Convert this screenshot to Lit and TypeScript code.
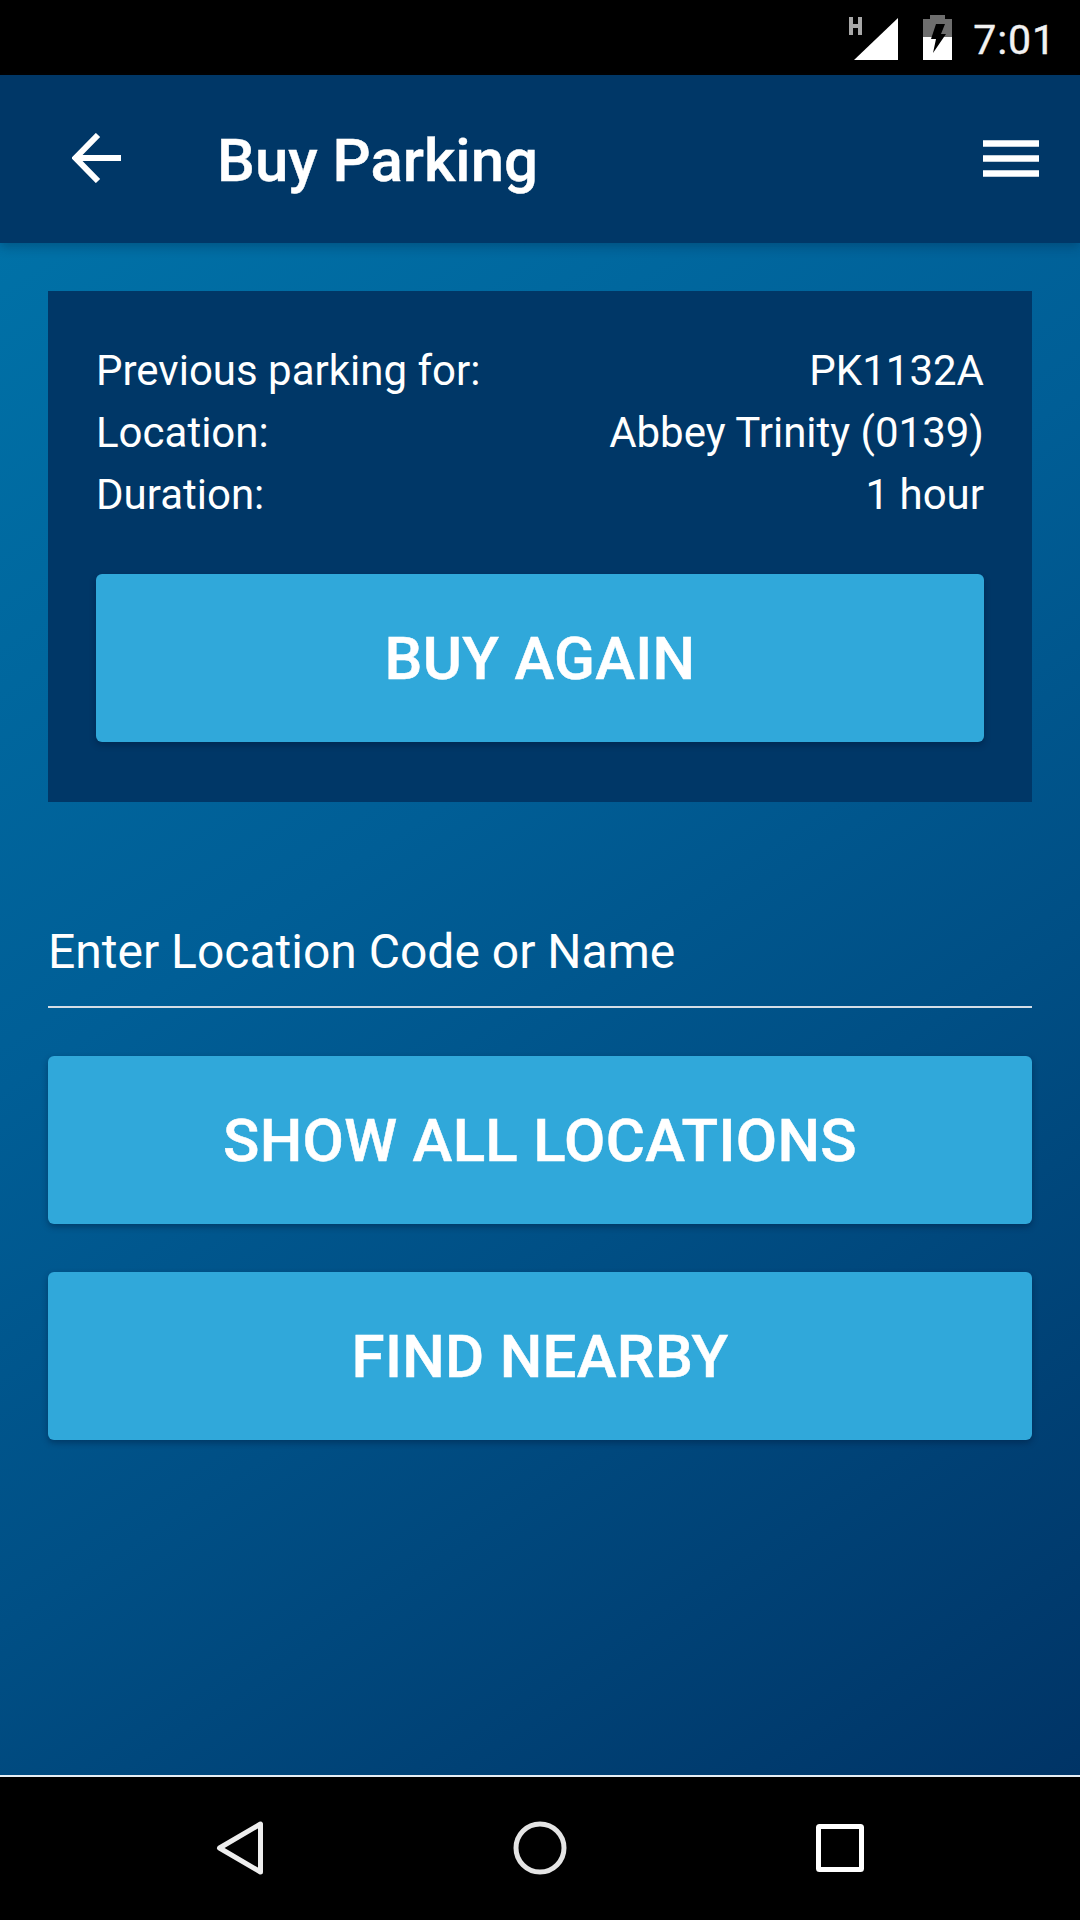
import { LitElement, html, css } from "lit";
import { customElement } from "lit/decorators.js";

@customElement("app-root")
export class AppRoot extends LitElement {
  static styles = css`
    :host { display: block; width: 1080px; height: 1920px; font-family: Roboto, "Liberation Sans", sans-serif; color: #fff; }
    .page { display: flex; flex-direction: column; height: 1920px; background: #000; overflow: hidden; }
    .status { height: 75px; flex: none; background: #000; display: flex; align-items: flex-start; padding-right: 24px; justify-content: flex-end; box-sizing: border-box; }
    .status svg { display: block; flex: none; }
    .sig { margin: 15px 0 0 0; }
    .bat { margin: 15px 0 0 24px; }
    .time { font-size: 41px; line-height: 48px; margin: 16px 0 0 21px; letter-spacing: 0.9px; color: #f2f2f2; -webkit-text-stroke: 0.4px #f2f2f2; }
    .bar { height: 168px; flex: none; background: #003767; display: flex; align-items: center; box-sizing: border-box; padding: 0 41px 0 72px; position: relative; z-index: 1; box-shadow: 0 4px 10px rgba(0, 30, 60, 0.3); }
    .bar svg { display: block; flex: none; }
    .back { margin-bottom: 3px; }
    .title { font-size: 60px; font-weight: 500; line-height: 70px; margin: 4px 0 0 96px; flex: 1; -webkit-text-stroke: 0.4px #fff; }
    .main { flex: 1; box-sizing: border-box; padding: 48px; display: flex; flex-direction: column; background: linear-gradient(147deg, #0071a7 0%, #005e96 38%, #004f85 62%, #003466 100%); }
    .panel { background: #003767; padding: 49px 48px 60px; display: flex; flex-direction: column; }
    .rows { display: flex; flex-direction: column; }
    .row { display: flex; justify-content: space-between; font-size: 42px; line-height: 62px; height: 62px; }
    .btn { height: 168px; flex: none; border-radius: 6px; background: #30a8da; box-shadow: 0 3px 6px rgba(0, 20, 50, 0.4); display: flex; align-items: center; justify-content: center; font-size: 60px; font-weight: 500; letter-spacing: 0.3px; -webkit-text-stroke: 0.5px #fff; }
    .panel .btn { margin-top: 48px; }
    .field { margin-top: 116px; height: 90px; box-sizing: border-box; border-bottom: 2px solid #d4dde6; font-size: 48px; line-height: 67px; }
    .field + .btn { margin-top: 48px; }
    .btn + .btn { margin-top: 48px; }
    .nav { height: 145px; flex: none; background: #000; border-top: 2px solid #e6eef4; box-sizing: border-box; display: flex; justify-content: space-between; align-items: flex-start; padding: 0 204px; }
    .nav svg { display: block; margin-top: 41px; }
  `;

  render() {
    return html`
      <div class="page">
        <div class="status">
          <svg class="sig" width="50" height="46" viewBox="0 0 50 46">
            <path d="M5 45 L49 3 V45 Z" fill="#fff"/>
            <path d="M2 2 V20 M11 2 V20 M2 11 H11" stroke="#a8a8a8" stroke-width="4" fill="none"/>
          </svg>
          <svg class="bat" width="29" height="45" viewBox="0 0 29 45">
            <path d="M7 0 H22 V4 H29 V45 H0 V4 H7 Z" fill="#6e6e6e"/>
            <path d="M0 22 H29 V45 H0 Z" fill="#fff"/>
            <path d="M13 9 H22 L18 19 H23 L10 38 L13 24 H8 Z" fill="#000"/>
          </svg>
          <span class="time">7:01</span>
        </div>
        <div class="bar">
          <svg class="back" width="49" height="50" viewBox="0 0 49 50">
            <path d="M26 2 L3.5 25 L26 48 M3.5 25 H49" fill="none" stroke="#fff" stroke-width="6"/>
          </svg>
          <span class="title">Buy Parking</span>
          <svg width="56" height="38" viewBox="0 0 56 38">
            <path d="M0 0.3 H56 V6.7 H0 Z M0 15.3 H56 V21.7 H0 Z M0 30.3 H56 V36.7 H0 Z" fill="#fff"/>
          </svg>
        </div>
        <div class="main">
          <div class="panel">
            <div class="rows">
              <div class="row"><span>Previous parking for:</span><span>PK1132A</span></div>
              <div class="row"><span>Location:</span><span>Abbey Trinity (0139)</span></div>
              <div class="row"><span>Duration:</span><span>1 hour</span></div>
            </div>
            <div class="btn">BUY AGAIN</div>
          </div>
          <div class="field">Enter Location Code or Name</div>
          <div class="btn">SHOW ALL LOCATIONS</div>
          <div class="btn">FIND NEARBY</div>
        </div>
        <div class="nav">
          <svg width="72" height="60" viewBox="0 0 72 60">
            <path d="M56.5 6 V54 L15.5 30 Z" fill="none" stroke="#eee" stroke-width="5" stroke-linejoin="round"/>
          </svg>
          <svg width="72" height="60" viewBox="0 0 72 60">
            <circle cx="36" cy="30" r="24" fill="none" stroke="#e4e4e4" stroke-width="5"/>
          </svg>
          <svg width="72" height="60" viewBox="0 0 72 60">
            <rect x="14.5" y="8.5" width="43" height="43" rx="1" fill="none" stroke="#fff" stroke-width="5"/>
          </svg>
        </div>
      </div>
    `;
  }
}
